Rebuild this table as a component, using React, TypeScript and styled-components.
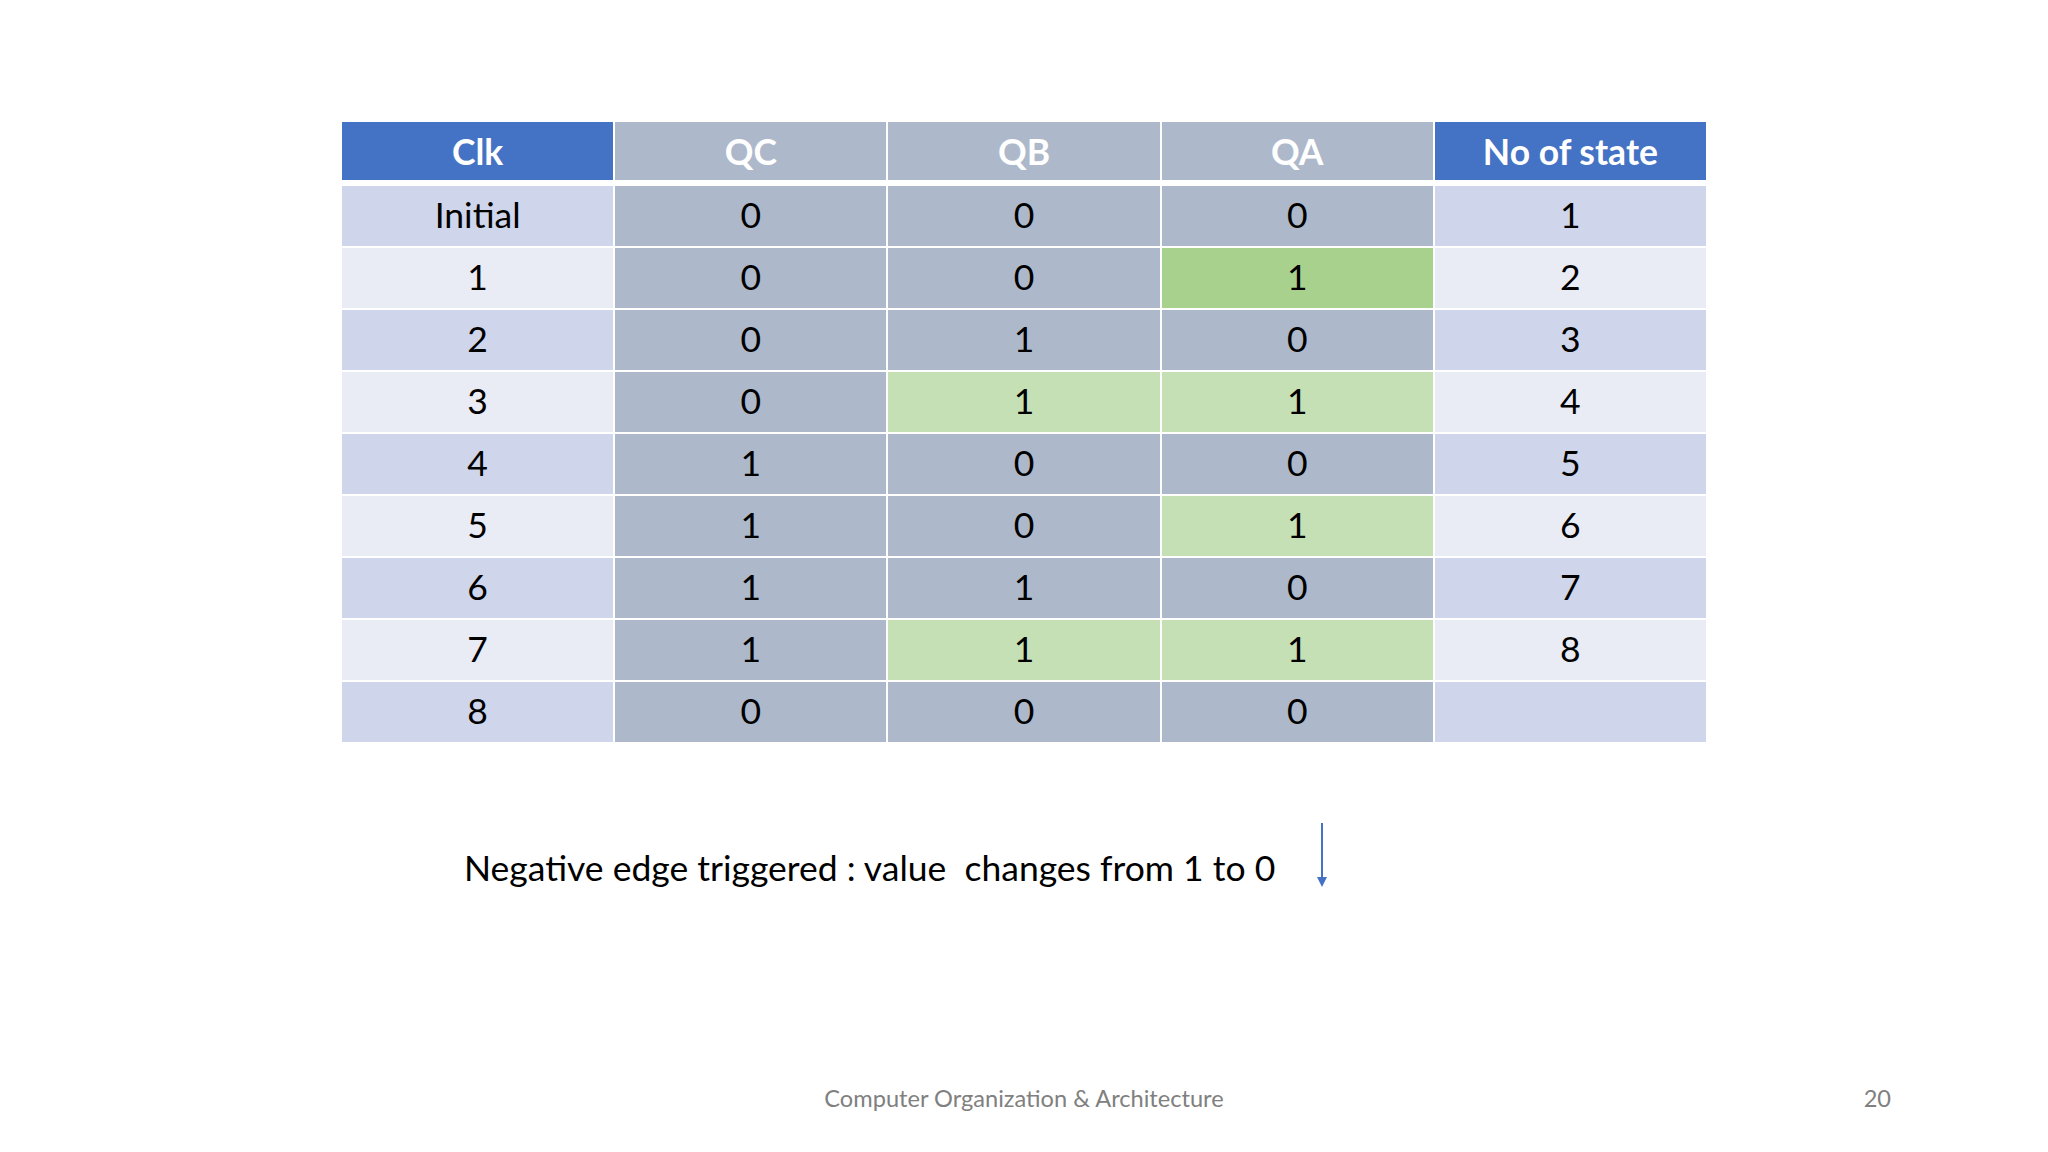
import React from "react";
import styled, { createGlobalStyle } from "styled-components";

const Global = createGlobalStyle`
  html, body { margin: 0; padding: 0; background: #ffffff; }
  body { font-family: "Lato", "Open Sans", sans-serif; }
`;

const Slide = styled.div`
  width: 2048px;
  height: 1152px;
  box-sizing: border-box;
  padding-top: 122px;
  padding-bottom: 20px;
  display: flex;
  flex-direction: column;
  align-items: stretch;
  background: #fff;
  overflow: hidden;
`;

const Table = styled.div`
  margin-left: 342px;
  width: 1364px;
  display: grid;
  grid-template-columns: repeat(5, 1fr);
  grid-template-rows: 62px repeat(9, 60px);
  column-gap: 2px;
  row-gap: 2px;
`;

const HeadCell = styled.div<{ $blue?: boolean }>`
  height: 58px;
  align-self: start;
  display: flex;
  align-items: center;
  justify-content: center;
  background: ${(p) => (p.$blue ? "#4472C4" : "#ADB9CA")};
  color: #ffffff;
  font-weight: 700;
  font-size: 35.5px;
`;

type Tone = "dark" | "light" | "gray" | "green" | "lightgreen";
const toneColor: Record<Tone, string> = {
  dark: "#CFD5EA",
  light: "#E9EBF5",
  gray: "#ADB9CA",
  green: "#A9D18E",
  lightgreen: "#C5E0B4",
};

const Cell = styled.div<{ $tone: Tone }>`
  display: flex;
  align-items: center;
  justify-content: center;
  box-sizing: border-box;
  padding-bottom: 4px;
  background: ${(p) => toneColor[p.$tone]};
  color: #000;
  font-size: 35.5px;
`;

const NoteRow = styled.div`
  margin-top: 92px;
  margin-left: 464px;
  display: flex;
  align-items: center;
  gap: 40px;
  height: 66px;
`;

const Note = styled.div`
  font-size: 35.5px;
  color: #000;
  white-space: pre;
`;

const Arrow = styled.svg`
  width: 14px;
  height: 66px;
  display: block;
  margin-bottom: 22px;
`;

const Footer = styled.div`
  margin-top: auto;
  height: 68px;
  display: grid;
  grid-template-columns: 1fr auto 1fr;
  align-items: center;
  color: #808080;
  font-size: 23.6px;
`;

const FooterTitle = styled.div`
  grid-column: 2;
`;

const PageNum = styled.div`
  grid-column: 3;
  justify-self: end;
  margin-right: 157px;
`;

const rows: { clk: string; qc: string; qb: string; qa: string; n: string; qbT?: Tone; qaT?: Tone }[] = [
  { clk: "Initial", qc: "0", qb: "0", qa: "0", n: "1" },
  { clk: "1", qc: "0", qb: "0", qa: "1", n: "2", qaT: "green" },
  { clk: "2", qc: "0", qb: "1", qa: "0", n: "3" },
  { clk: "3", qc: "0", qb: "1", qa: "1", n: "4", qbT: "lightgreen", qaT: "lightgreen" },
  { clk: "4", qc: "1", qb: "0", qa: "0", n: "5" },
  { clk: "5", qc: "1", qb: "0", qa: "1", n: "6", qaT: "lightgreen" },
  { clk: "6", qc: "1", qb: "1", qa: "0", n: "7" },
  { clk: "7", qc: "1", qb: "1", qa: "1", n: "8", qbT: "lightgreen", qaT: "lightgreen" },
  { clk: "8", qc: "0", qb: "0", qa: "0", n: "" },
];

export default function App() {
  return (
    <>
      <Global />
      <Slide>
        <Table>
          <HeadCell $blue>Clk</HeadCell>
          <HeadCell>QC</HeadCell>
          <HeadCell>QB</HeadCell>
          <HeadCell>QA</HeadCell>
          <HeadCell $blue>No of state</HeadCell>
          {rows.map((r, i) => {
            const side: Tone = i % 2 === 0 ? "dark" : "light";
            return (
              <React.Fragment key={i}>
                <Cell $tone={side}>{r.clk}</Cell>
                <Cell $tone="gray">{r.qc}</Cell>
                <Cell $tone={r.qbT ?? "gray"}>{r.qb}</Cell>
                <Cell $tone={r.qaT ?? "gray"}>{r.qa}</Cell>
                <Cell $tone={side}>{r.n}</Cell>
              </React.Fragment>
            );
          })}
        </Table>
        <NoteRow>
          <Note>{"Negative edge triggered : value  changes from 1 to 0"}</Note>
          <Arrow viewBox="0 0 14 66">
            <line x1="7" y1="0" x2="7" y2="56" stroke="#4472C4" strokeWidth="2" />
            <polygon points="2,54 12,54 7,64" fill="#4472C4" />
          </Arrow>
        </NoteRow>
        <Footer>
          <FooterTitle>Computer Organization &amp; Architecture</FooterTitle>
          <PageNum>20</PageNum>
        </Footer>
      </Slide>
    </>
  );
}
